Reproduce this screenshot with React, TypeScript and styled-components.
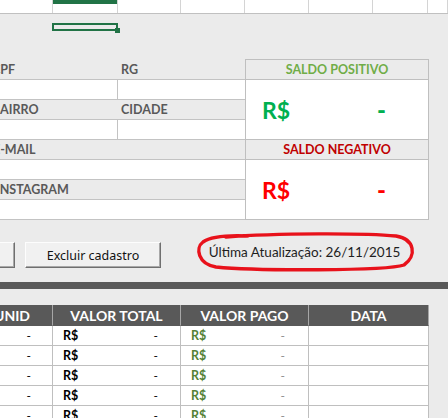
import React from 'react';
import styled, { createGlobalStyle } from 'styled-components';

const GlobalStyle = createGlobalStyle`
  html, body {
    margin: 0;
    padding: 0;
  }
  body {
    width: 448px;
    height: 418px;
    overflow: hidden;
    background: #ebebeb;
    font-family: 'Lato', 'Liberation Sans', sans-serif;
  }
`;

const topCells = [53, 65, 63, 64, 64, 64, 55, 20];

const tableRows = [0, 1, 2, 3, 4];

const App: React.FC = () => {
  return (
    <Sheet>
      <GlobalStyle />
      <TopRow>
        {topCells.map((w, i) => (
          <TopCell key={i} $width={w} $selected={i === 1} />
        ))}
      </TopRow>

      <Selection>
        <Handle />
      </Selection>

      <FormArea>
        <LeftForm>
          <FormRow>
            <FormCell $width={118}>
              <Label $indent={-8}>CPF</Label>
            </FormCell>
            <FormCell>
              <Label $indent={3}>RG</Label>
            </FormCell>
          </FormRow>
          <FormRow $white>
            <FormCell $width={118} $divider />
            <FormCell />
          </FormRow>
          <FormRow>
            <FormCell $width={118}>
              <Label $indent={-8}>BAIRRO</Label>
            </FormCell>
            <FormCell>
              <Label $indent={3}>CIDADE</Label>
            </FormCell>
          </FormRow>
          <FormRow $white>
            <FormCell $width={118} $divider />
            <FormCell />
          </FormRow>
          <FormRow>
            <FormCell>
              <Label $indent={-7}>E-MAIL</Label>
            </FormCell>
          </FormRow>
          <FormRow $white />
          <FormRow>
            <FormCell>
              <Label $indent={-4}>INSTAGRAM</Label>
            </FormCell>
          </FormRow>
          <FormRow $white />
        </LeftForm>

        <SaldoBox>
          <SaldoHeader $color="#70ad47">SALDO POSITIVO</SaldoHeader>
          <SaldoBody $color="#00b050">
            <Currency>R$</Currency>
            <Dash>-</Dash>
          </SaldoBody>
          <SaldoHeader $color="#c00000">SALDO NEGATIVO</SaldoHeader>
          <SaldoBody $color="#ff0000" $last>
            <Currency>R$</Currency>
            <Dash>-</Dash>
          </SaldoBody>
        </SaldoBox>
      </FormArea>

      <ActionBar>
        <SheetButton $width={100} $offset={-85} />
        <SheetButton $width={136} $offset={10}>
          Excluir cadastro
        </SheetButton>
        <Annotation>
          <UpdatedText>Última Atualização: 26/11/2015</UpdatedText>
          <Scribble viewBox="0 0 217 36" preserveAspectRatio="none">
            <path
              d="M 30 3 C 80 -1, 170 -1, 200 2 C 219 5, 221 22, 208 31 C 190 37, 60 37, 20 33 C 2 30, -1 14, 7 8 C 14 3, 30 1, 52 2"
              fill="none"
              stroke="#e8121b"
              strokeWidth="3.4"
              strokeLinecap="round"
            />
          </Scribble>
        </Annotation>
      </ActionBar>

      <DarkBar />

      <Table>
        <HeadCell $align="right" $pad={22}>
          UNID
        </HeadCell>
        <HeadCell>VALOR TOTAL</HeadCell>
        <HeadCell>VALOR PAGO</HeadCell>
        <HeadCell>DATA</HeadCell>
        {tableRows.map((r) => (
          <React.Fragment key={r}>
            <BodyCell $justify="flex-end" $padRight={21}>
              <Amount>-</Amount>
            </BodyCell>
            <BodyCell $justify="space-between" $padLeft={10} $padRight={22}>
              <Money $color="#000000">R$</Money>
              <Amount>-</Amount>
            </BodyCell>
            <BodyCell $justify="space-between" $padLeft={10} $padRight={23}>
              <Money $color="#548235">R$</Money>
              <Amount $color="#8c8c8c">-</Amount>
            </BodyCell>
            <BodyCell />
          </React.Fragment>
        ))}
      </Table>
    </Sheet>
  );
};

const Sheet = styled.div`
  width: 448px;
  height: 418px;
  overflow: hidden;
  display: flex;
  flex-direction: column;
`;

const TopRow = styled.div`
  display: flex;
  height: 14px;
  flex-shrink: 0;
  background: #ffffff;
  border-bottom: 1px solid #c0c0c0;
  box-sizing: border-box;
`;

const TopCell = styled.div<{ $width: number; $selected?: boolean }>`
  width: ${(p) => p.$width}px;
  flex-shrink: 0;
  box-sizing: border-box;
  border-right: 1px solid #d4d4d4;
  box-shadow: ${(p) => (p.$selected ? 'inset 0 4px 0 #217346' : 'none')};
`;

const Selection = styled.div`
  position: relative;
  flex-shrink: 0;
  margin: 9px 0 0 52px;
  width: 66px;
  height: 8px;
  box-sizing: border-box;
  border: 2px solid #217346;
`;

const Handle = styled.span`
  position: absolute;
  right: -4px;
  bottom: -4px;
  width: 5px;
  height: 5px;
  background: #217346;
`;

const FormArea = styled.div`
  display: flex;
  flex-shrink: 0;
  margin-top: 28px;
`;

const LeftForm = styled.div`
  width: 245px;
  padding-top: 1px;
  display: flex;
  flex-direction: column;
`;

const FormRow = styled.div<{ $white?: boolean }>`
  display: flex;
  height: 20px;
  box-sizing: border-box;
  border-bottom: 1px solid #c3c3c3;
  background: ${(p) => (p.$white ? '#ffffff' : 'transparent')};
`;

const FormCell = styled.div<{ $width?: number; $divider?: boolean }>`
  ${(p) => (p.$width ? `width: ${p.$width}px;` : 'flex: 1;')}
  flex-shrink: 0;
  box-sizing: border-box;
  display: flex;
  align-items: center;
  overflow: hidden;
  border-right: ${(p) => (p.$divider ? '1px solid #c3c3c3' : 'none')};
`;

const Label = styled.span<{ $indent: number }>`
  margin-left: ${(p) => p.$indent}px;
  color: #595959;
  font-size: 12.5px;
  font-weight: 700;
  white-space: nowrap;
`;

const SaldoBox = styled.div`
  width: 184px;
  display: flex;
  flex-direction: column;
  border: 1px solid #bfbfbf;
  box-sizing: border-box;
  height: 161px;
`;

const SaldoHeader = styled.div<{ $color: string }>`
  height: 20px;
  box-sizing: border-box;
  border-bottom: 1px solid #bfbfbf;
  display: flex;
  align-items: center;
  justify-content: center;
  color: ${(p) => p.$color};
  font-size: 12.5px;
  font-weight: 700;
`;

const SaldoBody = styled.div<{ $color: string; $last?: boolean }>`
  height: ${(p) => (p.$last ? 59 : 60)}px;
  box-sizing: border-box;
  border-bottom: ${(p) => (p.$last ? 'none' : '1px solid #bfbfbf')};
  background: #ffffff;
  display: flex;
  align-items: center;
  padding-left: 16px;
  color: ${(p) => p.$color};
  font-weight: 700;
`;

const Currency = styled.span`
  width: 115px;
  font-size: 23px;
`;

const Dash = styled.span`
  font-size: 24px;
  font-weight: 900;
`;

const ActionBar = styled.div`
  display: flex;
  align-items: flex-start;
  flex-shrink: 0;
  height: 36px;
  margin-top: 14px;
`;

const SheetButton = styled.div<{ $width: number; $offset: number }>`
  width: ${(p) => p.$width}px;
  height: 26px;
  margin: 8px 0 0 ${(p) => p.$offset}px;
  flex-shrink: 0;
  box-sizing: border-box;
  display: flex;
  align-items: center;
  justify-content: center;
  background: #f1f1f1;
  border: 1px solid;
  border-color: #fdfdfd #6f6f6f #6f6f6f #fdfdfd;
  box-shadow: inset -1px -1px 0 #a8a8a8;
  color: #111111;
  font-family: 'Noto Sans', 'Open Sans', sans-serif;
  font-size: 12.5px;
`;

const Annotation = styled.div`
  position: relative;
  width: 217px;
  height: 36px;
  margin-left: 35px;
  flex-shrink: 0;
  display: flex;
  align-items: center;
  justify-content: center;
`;

const UpdatedText = styled.span`
  color: #1e1e1e;
  font-size: 13.5px;
  white-space: nowrap;
`;

const Scribble = styled.svg`
  position: absolute;
  inset: 0;
  width: 100%;
  height: 100%;
  overflow: visible;
`;

const DarkBar = styled.div`
  flex-shrink: 0;
  height: 7px;
  margin-top: 12px;
  background: #595959;
`;

const Table = styled.div`
  display: grid;
  grid-template-columns: 53px 128px 128px 120px;
  grid-auto-rows: 20px;
  grid-template-rows: 21px;
  margin-top: 16px;
  width: 429px;
`;

const HeadCell = styled.div<{ $align?: string; $pad?: number }>`
  background: #595959;
  color: #ffffff;
  font-size: 14px;
  font-weight: 700;
  white-space: nowrap;
  display: flex;
  align-items: center;
  justify-content: ${(p) => (p.$align === 'right' ? 'flex-end' : 'center')};
  padding-right: ${(p) => p.$pad ?? 0}px;
  box-sizing: border-box;
  border-right: 1px solid #a6a6a6;
  border-bottom: 1px solid #595959;
`;

const BodyCell = styled.div<{
  $justify?: string;
  $padLeft?: number;
  $padRight?: number;
}>`
  background: #ffffff;
  display: flex;
  align-items: center;
  justify-content: ${(p) => p.$justify ?? 'flex-start'};
  padding-left: ${(p) => p.$padLeft ?? 0}px;
  padding-right: ${(p) => p.$padRight ?? 0}px;
  box-sizing: border-box;
  border-right: 1px solid #bfbfbf;
  border-bottom: 1px solid #bfbfbf;
`;

const Money = styled.span<{ $color: string }>`
  color: ${(p) => p.$color};
  font-size: 12.5px;
  font-weight: 700;
`;

const Amount = styled.span<{ $color?: string }>`
  color: ${(p) => p.$color ?? '#000000'};
  font-size: 12px;
`;

export default App;
